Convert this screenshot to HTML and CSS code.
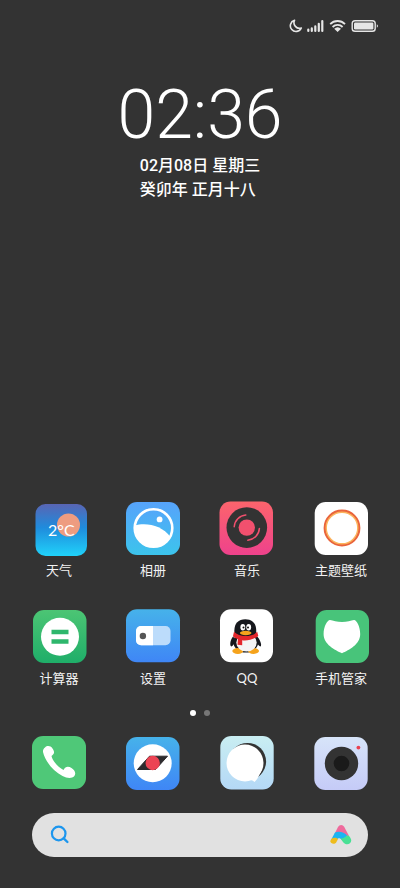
FILE: index.html
```html
<!DOCTYPE html>
<html lang="zh-CN">
<head>
    <meta charset="UTF-8">
    <meta name="viewport" content="width=device-width, initial-scale=1.0">
    <title>桌面</title>
    <link rel="stylesheet" href="styles.css">
</head>

<body>
    <!-- 状态栏 -->
    <header class="status">
        <svg class="status-icons" viewBox="0 0 90 16" role="img" aria-label="勿扰 信号 WiFi 电量">
            <path d="M5.500 2.300A5.700 5.700 0 1 0 12.300 10A5.600 5.600 0 0 1 5.500 2.300Z" fill="none" stroke="#e6e6e6" stroke-width="1.600" stroke-linejoin="round"/>
            <path d="M19.300 13v-1.400M22.800 13v-2.600M26.300 13V8.400M29.800 13V5.800M33.300 13V3" stroke="#e6e6e6" stroke-width="2.200" stroke-linecap="round"/>
            <g fill="none" stroke="#e6e6e6" stroke-width="1.800">
                <path d="M41.200 6.200A10.200 10.200 0 0 1 56 6.200"/>
                <path d="M43.600 9A7 7 0 0 1 53.600 9"/>
            </g>
            <path d="M45.200 10.800a5 5 0 0 1 6.800 0L48.600 14Z" fill="#e6e6e6"/>
            <rect x="63.200" y="2.800" width="23" height="10.400" rx="2.800" fill="none" stroke="#e6e6e6" stroke-width="1.400"/>
            <rect x="65" y="4.600" width="19.400" height="6.800" rx="1.200" fill="#e6e6e6"/>
            <path d="M87.800 6.200a2 2 0 0 1 0 3.600Z" fill="#e6e6e6"/>
        </svg>
    </header>

    <!-- 时钟 -->
    <section class="clock">
        <h1 class="time">02:36</h1>
        <div class="date">
            <p>02月08日 星期三</p>
            <p>癸卯年 正月十八</p>
        </div>
    </section>

    <!-- 应用 -->
    <main class="apps">
        <a class="app" href="#">
            <svg class="icon" viewBox="0 0 60 54" aria-hidden="true">
                <defs>
                    <linearGradient id="sky" x1="0" y1="0" x2="0" y2="1">
                        <stop offset="0" stop-color="#5965b4"/>
                        <stop offset=".45" stop-color="#1f8bdc"/>
                        <stop offset="1" stop-color="#20d2fa"/>
                    </linearGradient>
                </defs>
                <rect x="6.500" y="3" width="51.500" height="52" rx="10" fill="url(#sky)"/>
                <circle cx="39.500" cy="24" r="11.500" fill="#ee9c80"/>
                <text class="degree" x="19" y="35">2°C</text>
            </svg>
            <span class="name">天气</span>
        </a>
        <a class="app" href="#">
            <svg class="icon" viewBox="0 0 60 54" aria-hidden="true">
                <defs>
                    <linearGradient id="album" x1="0" y1="0" x2="0" y2="1">
                        <stop offset="0" stop-color="#57a3fb"/>
                        <stop offset="1" stop-color="#3cc4ec"/>
                    </linearGradient>
                </defs>
                <rect x="3" y="1" width="54" height="53" rx="11" fill="url(#album)"/>
                <circle cx="30.500" cy="27" r="18.800" fill="none" stroke="#fff" stroke-width="2.600"/>
                <path d="M11.400 24.500C23 21 39 24 47.500 36A19.300 19.300 0 0 1 11.400 24.500Z" fill="#fff"/>
                <circle cx="36.600" cy="18.400" r="2.900" fill="#fff"/>
            </svg>
            <span class="name">相册</span>
        </a>
        <a class="app" href="#">
            <svg class="icon" viewBox="0 0 60 54" aria-hidden="true">
                <defs>
                    <linearGradient id="music" x1="0" y1="0" x2="0" y2="1">
                        <stop offset="0" stop-color="#fc646c"/>
                        <stop offset="1" stop-color="#ee428c"/>
                    </linearGradient>
                </defs>
                <rect x="2.500" y="0.500" width="53.500" height="53.500" rx="11" fill="url(#music)"/>
                <circle cx="29.800" cy="26.600" r="20.300" fill="#333"/>
                <circle cx="29.800" cy="26.600" r="8.200" fill="#f2506e"/>
                <g fill="none" stroke="#f2506e" stroke-width="1.500" stroke-linecap="round">
                    <path d="M17.200 25.800A12.600 12.600 0 0 1 28.800 14"/>
                    <path d="M42.400 27.400A12.600 12.600 0 0 1 30.800 39.200"/>
                </g>
            </svg>
            <span class="name">音乐</span>
        </a>
        <a class="app" href="#">
            <svg class="icon" viewBox="0 0 60 54" aria-hidden="true">
                <rect x="3.700" y="1" width="53.300" height="53" rx="11" fill="#fff"/>
                <circle cx="31" cy="27" r="17.200" fill="none" stroke="#e9643c" stroke-width="2.400"/>
                <circle cx="31" cy="27" r="15.800" fill="none" stroke="#fcb45c" stroke-width="1.400"/>
            </svg>
            <span class="name">主题壁纸</span>
        </a>
        <a class="app" href="#">
            <svg class="icon" viewBox="0 0 60 54" aria-hidden="true">
                <defs>
                    <linearGradient id="calc" x1="0" y1="0" x2="0" y2="1">
                        <stop offset="0" stop-color="#4cc574"/>
                        <stop offset="1" stop-color="#1fae69"/>
                    </linearGradient>
                </defs>
                <rect x="4" y="1" width="53.500" height="53" rx="11" fill="url(#calc)"/>
                <circle cx="31" cy="27.700" r="19" fill="#fff"/>
                <path d="M22.500 20.700h17v4.500h-17ZM22.500 30.300h17v4.500h-17Z" fill="#2eb76c"/>
            </svg>
            <span class="name">计算器</span>
        </a>
        <a class="app" href="#">
            <svg class="icon" viewBox="0 0 60 54" aria-hidden="true">
                <defs>
                    <linearGradient id="blue" x1="0" y1="0" x2="0" y2="1">
                        <stop offset="0" stop-color="#46b2ea"/>
                        <stop offset="1" stop-color="#3f86f6"/>
                    </linearGradient>
                </defs>
                <rect x="3" y="0.300" width="54" height="53" rx="11" fill="url(#blue)"/>
                <rect x="13" y="17" width="34.500" height="19.300" rx="5" fill="#bcdcfb"/>
                <path d="M18 17h12v19.300H18a5 5 0 0 1-5-5V22a5 5 0 0 1 5-5Z" fill="#fff"/>
                <circle cx="19.900" cy="27" r="3.200" fill="#555"/>
            </svg>
            <span class="name">设置</span>
        </a>
        <a class="app" href="#">
            <svg class="icon" viewBox="0 0 60 54" aria-hidden="true">
                <rect x="3" y="0.300" width="53" height="53" rx="11" fill="#fff"/>
                <path d="M16.400 27C13 31 12.500 36 14.200 37.400C15.500 37.500 17 35 18 33ZM39.800 27C43.500 31 45 36 43.600 37.400C42.300 37.500 40.500 35 39.500 33Z" fill="#16181d"/>
                <ellipse cx="28.800" cy="33" rx="12.500" ry="10.500" fill="#16181d"/>
                <ellipse cx="20.800" cy="42" rx="5.500" ry="2.900" fill="#f5a31c"/>
                <ellipse cx="36.500" cy="42" rx="5.500" ry="2.900" fill="#f5a31c"/>
                <ellipse cx="29.500" cy="33.600" rx="10.200" ry="9" fill="#f4f4f4"/>
                <path d="M17.600 25C16.300 15.500 20.500 10.300 28.300 10.300S40.300 15.500 39 25C35 30 22 30 17.600 25Z" fill="#16181d"/>
                <ellipse cx="25.800" cy="18.300" rx="2.400" ry="3.300" fill="#fff"/>
                <ellipse cx="31.700" cy="18.300" rx="2.400" ry="3.300" fill="#fff"/>
                <circle cx="26.500" cy="18.600" r="1" fill="#111"/>
                <circle cx="31" cy="18.600" r="1" fill="#111"/>
                <ellipse cx="28.700" cy="24" rx="5.800" ry="2.200" fill="#f5a31c"/>
                <path d="M17 22.800C22 28.500 35 28.500 40.200 22.800L41.300 27C36 31.500 28 31.800 25.200 31.200V36.300L20.500 35.800L21 30.200C19 29.500 17 28.500 16 27Z" fill="#e3262b"/>
            </svg>
            <span class="name">QQ</span>
        </a>
        <a class="app" href="#">
            <svg class="icon" viewBox="0 0 60 54" aria-hidden="true">
                <rect x="4.700" y="1" width="53.300" height="53" rx="11" fill="#48c47a"/>
                <path d="M19 11C22 11.500 26 13 31 13S40 11.500 43 11C45.500 10.800 49.200 17.500 49.200 25C49.200 35.500 38 41 31 44.200C24 41 12.600 35.500 12.600 25C12.600 17.500 16.500 10.800 19 11Z" fill="#fff"/>
            </svg>
            <span class="name">手机管家</span>
        </a>
    </main>

    <!-- 分页 -->
    <div class="pages">
        <span class="dot active"></span>
        <span class="dot"></span>
    </div>

    <!-- 底栏 -->
    <nav class="dock">
        <a class="app" href="#" aria-label="电话">
            <svg class="icon" viewBox="0 0 60 54" aria-hidden="true">
                <rect x="3" y="1" width="54" height="53" rx="11" fill="#4fc878"/>
                <path d="M16 12.500C18 10.500 21.500 10.500 23.500 13.500C25.500 16.500 26 18.500 22.500 21C23.500 26 29.500 32.500 34.500 35C36.500 31 39.500 31 42.500 33C46 35.500 47.500 38.500 45 41.500C43 43.500 38 43.500 33.500 41C24 36 16 26 14 17C13.800 15 14.500 13.800 16 12.500Z" fill="#fff"/>
            </svg>
        </a>
        <a class="app" href="#" aria-label="浏览器">
            <svg class="icon" viewBox="0 0 60 54" aria-hidden="true">
                <rect x="3" y="2" width="53.500" height="53" rx="11" fill="url(#blue)"/>
                <circle cx="29.700" cy="28.300" r="19" fill="#fff"/>
                <path d="M14.500 34.500L26.500 21.200H44.500L32.500 34.500Z" fill="#2d2b2e" stroke="#2d2b2e" stroke-linejoin="round"/>
                <circle cx="29.700" cy="28" r="7.200" fill="#ec4454"/>
            </svg>
        </a>
        <a class="app" href="#" aria-label="短信">
            <svg class="icon" viewBox="0 0 60 54" aria-hidden="true">
                <defs>
                    <linearGradient id="sms" x1="0" y1="0" x2="0" y2="1">
                        <stop offset="0" stop-color="#c9eef2"/>
                        <stop offset="1" stop-color="#b4d8f6"/>
                    </linearGradient>
                </defs>
                <rect x="3.300" y="1" width="53.400" height="53.500" rx="11" fill="url(#sms)"/>
                <circle cx="30.500" cy="26.500" r="18.600" fill="#333"/>
                <circle cx="28" cy="28" r="18.500" fill="#fff"/>
                <path d="M45 34L42 40.500C41 43 39.500 45 37.500 47C36.700 46.200 36 45.500 34 45Z" fill="#fff"/>
            </svg>
        </a>
        <a class="app" href="#" aria-label="相机">
            <svg class="icon" viewBox="0 0 60 54" aria-hidden="true">
                <defs>
                    <linearGradient id="camera" x1="0" y1="0" x2="0" y2="1">
                        <stop offset="0" stop-color="#d7e4f9"/>
                        <stop offset="1" stop-color="#c5cbf7"/>
                    </linearGradient>
                </defs>
                <rect x="3.300" y="2" width="53.400" height="53" rx="11" fill="url(#camera)"/>
                <circle cx="30.500" cy="28.500" r="16.700" fill="#333"/>
                <circle cx="30.500" cy="28.500" r="7.800" fill="#1a1a1a"/>
                <circle cx="47.400" cy="12.600" r="1.900" fill="#ea4050"/>
            </svg>
        </a>
    </nav>

    <!-- 搜索框 -->
    <form class="search">
        <svg class="search-icon" viewBox="0 0 20 20" aria-hidden="true">
            <circle cx="8.700" cy="8.500" r="6.800" fill="none" stroke="#1c96ee" stroke-width="2.200"/>
            <path d="M13.700 13.400L17.400 17" stroke="#1c96ee" stroke-width="2.400" stroke-linecap="round"/>
        </svg>
        <input class="search-input" type="text" aria-label="搜索">
        <button class="assistant" type="button" aria-label="小爱同学">
            <svg viewBox="0 0 22 22" aria-hidden="true">
                <path d="M4.500 10L8 3C9.500 .3 12.800 .3 14.300 3L19 12L11 11Z" fill="#ee6a9c"/>
                <path d="M5 8.500C9 7 14 8 17.500 12L12 16C10 13.500 8 13.500 6.500 16L1.300 15.500Z" fill="#1cb4f2"/>
                <path d="M1.200 15C3.500 13.200 6.500 13.600 8 15L6.200 18.600C4.500 21 -.7 19.800 .6 16.300Z" fill="#eebc1c"/>
                <path d="M10.500 14.500C13 14.800 15.500 12.800 17.300 11.500C19.200 11.500 20.200 13.200 21 15.200C22.200 18.500 18.500 21.300 15.500 20C13 18.800 12 16.500 10.500 14.500Z" fill="#48e094"/>
            </svg>
        </button>
    </form>
</body>

</html>
```
FILE: styles.css
```css
* {
    margin: 0;
    padding: 0;
    box-sizing: border-box;
}

body {
    display: flex;
    flex-direction: column;
    min-height: 100vh;
    background-color: #333;
    color: #fff;
    font-family: Roboto, "Noto Sans CJK SC", sans-serif;
}

/* Status bar */
.status {
    display: flex;
    justify-content: flex-end;
    padding: 18px 21px 0;
}

.status-icons {
    width: 90px;
    height: 16px;
}

/* Clock */
.clock {
    display: flex;
    flex-direction: column;
    align-items: center;
    padding-top: 45px;
}

.time {
    font-size: 68px;
    font-weight: 300;
    line-height: 72px;
}

.date {
    padding-top: 3px;
    font-size: 16px;
    font-weight: 500;
    line-height: 24px;
}

/* Apps */
.apps,
.dock {
    display: grid;
    grid-template-columns: repeat(4, 1fr);
    padding: 0 12px;
}

.apps {
    row-gap: 29px;
    margin-top: auto;
}

.app {
    display: flex;
    flex-direction: column;
    align-items: center;
    color: #f2f2f2;
    text-decoration: none;
}

.icon {
    width: 60px;
    height: 54px;
    overflow: visible;
}

.name {
    padding-top: 5px;
    font-family: Lato, "Noto Sans CJK SC", sans-serif;
    font-size: 13px;
    line-height: 20px;
}

.degree {
    fill: #fff;
    font-family: Lato, sans-serif;
    font-size: 16px;
}

/* Page dots */
.pages {
    display: flex;
    justify-content: center;
    gap: 8px;
    padding: 22px 0 19px;
}

.dot {
    width: 6px;
    height: 6px;
    border-radius: 50%;
    background-color: #777;
}

.dot.active {
    background-color: #fff;
}

/* Search */
.search {
    display: flex;
    align-items: center;
    height: 44px;
    margin: 24px 32px 31px;
    padding: 0 16px 0 18px;
    border-radius: 22px;
    background-color: #e1e1e1;
}

.search-icon {
    width: 20px;
    height: 20px;
}

.search-input {
    flex: 1;
    min-width: 0;
    height: 100%;
    border: none;
    outline: none;
    background: transparent;
    font-size: 16px;
}

.assistant {
    width: 22px;
    height: 22px;
    border: none;
    background: transparent;
    cursor: pointer;
}
```
